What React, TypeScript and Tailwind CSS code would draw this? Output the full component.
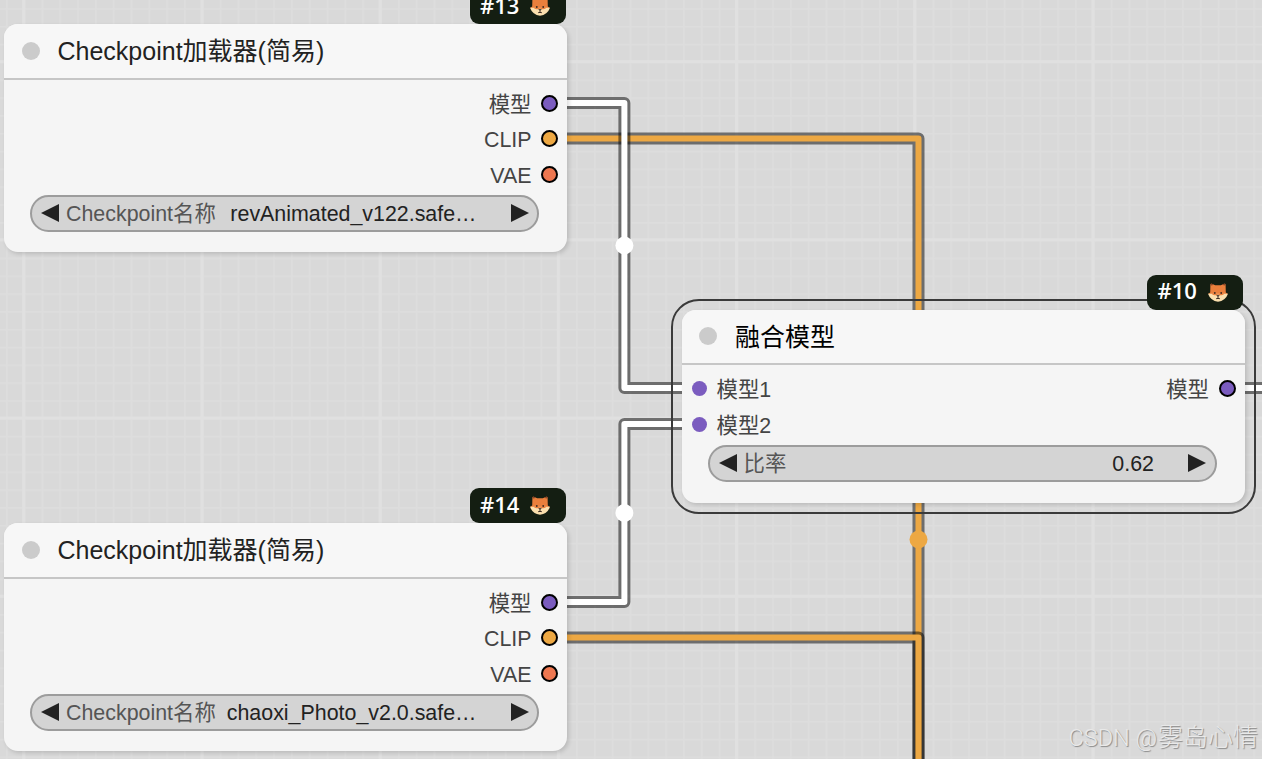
import type { ReactNode } from "react";

const MODEL = "#7b5cbf";
const CLIP = "#eda843";
const VAE = "#ee7750";

type Slot = { label: string; color: string };

function Fox() {
  return (
    <svg width="20" height="19" viewBox="0 0 20 19" className="shrink-0" aria-hidden>
      <path d="M2.4 1.4 Q2.6 .3 3.8 .8 L7.2 2.2 H12.8 L16.2 .8 Q17.4 .3 17.6 1.4 L17.8 9.6 L20 11 H0 L2.2 9.6 Z" fill="#ea7f3c" />
      <path d="M0 10.8 H20 Q17.4 18 10 18.8 Q2.6 18 0 10.8 Z" fill="#fbdfae" />
      <path d="M3.6 10.6 H16.4 Q15.4 12.8 12 12.2 L10 11.4 L8 12.2 Q4.6 12.8 3.6 10.6 Z" fill="#ea7f3c" />
      <path d="M2.4 1.4 Q2.6 .3 3.8 .8 L6.2 1.8 L3.2 2.4 Z M17.6 1.4 Q17.4 .3 16.2 .8 L13.8 1.8 L16.8 2.4 Z" fill="#8a4527" />
      <circle cx="6.8" cy="10" r="0.9" fill="#3b2a22" />
      <circle cx="13.2" cy="10" r="0.9" fill="#3b2a22" />
      <path d="M8.8 12.4 H11.2 L10 13.8 Z M8 16 L10 14.6 L12 16" fill="#3b2a22" stroke="#3b2a22" strokeWidth="0.7" />
    </svg>
  );
}

function Badge({ id }: { id: number }) {
  return (
    <div className="absolute right-[1.5px] bottom-full flex h-[35px] w-[96px] items-center gap-[11px] rounded-[9px] bg-[#141e12] pl-[10.5px] font-['Open_Sans','Noto_Sans',sans-serif] text-[22px] leading-none font-semibold text-white">
      <span className="pb-[4px]">#{id}</span>
      <Fox />
    </div>
  );
}

function Input({ label, color }: Slot) {
  return (
    <div className="flex h-[35.6px] items-center gap-[10px]">
      <span className="size-[15px] rounded-full" style={{ backgroundColor: color }} />
      <span className="pt-[4px]">{label}</span>
    </div>
  );
}

function Output({ label, color }: Slot) {
  return (
    <div className="flex h-[35.6px] items-center justify-end gap-[9.5px]">
      <span className="pt-[4px]">{label}</span>
      <span className="size-[17px] rounded-full border-2 border-black" style={{ backgroundColor: color }} />
    </div>
  );
}

function Arrow({ flip }: { flip?: boolean }) {
  return (
    <svg width="18" height="18" viewBox="0 0 18 18" className={flip ? "shrink-0 rotate-180" : "shrink-0"} aria-hidden>
      <path d="M0 0 L18 9 L0 18 Z" fill="#222" />
    </svg>
  );
}

function Widget({ label, value }: { label: string; value: string }) {
  return (
    <div className="mr-[28px] ml-[26px] flex h-[37px] items-center rounded-full border-2 border-[#9c9c9c] bg-[#d4d4d4] pr-[8.5px] pl-[9px]">
      <Arrow flip />
      <span className="ml-[7px] pt-[3px] text-[#555]">{label}</span>
      <span className="mr-[34px] ml-auto pt-[3px] text-[#222]">{value}</span>
      <Arrow />
    </div>
  );
}

type NodeProps = {
  id: number;
  title: string;
  inputs?: Slot[];
  outputs: Slot[];
  className: string;
  selected?: boolean;
  children: ReactNode;
};

function GraphNode({ id, title, inputs = [], outputs, className, selected, children }: NodeProps) {
  return (
    <section className={`absolute w-[563px] rounded-[14px] bg-[#f5f5f5] shadow-[2px_2px_4px_rgba(0,0,0,0.14)] ${className}`}>
      {selected && <div className="absolute -inset-[11px] rounded-[28px] border-2 border-[#3a3a3a]" />}
      <header className="flex h-[55.5px] items-center gap-[18px] rounded-t-[14px] border-b-2 border-[#c6c6c6] bg-[#f7f7f7] pl-[17.5px]">
        <span className="size-[18px] rounded-full bg-[#cbcbcb]" />
        <h2 className={`pt-[2px] text-[25px] leading-none ${selected ? "text-black" : "text-[#222]"}`}>{title}</h2>
      </header>
      <div className="flex justify-between pt-[6px] pr-[9px] pb-[2.5px] pl-[10px] text-[21.4px] leading-none text-[#444]">
        <div>
          {inputs.map((slot) => (
            <Input key={slot.label} {...slot} />
          ))}
        </div>
        <div>
          {outputs.map((slot) => (
            <Output key={slot.label} {...slot} />
          ))}
        </div>
      </div>
      <div className="text-[21.4px] leading-none">{children}</div>
      <Badge id={id} />
    </section>
  );
}

const loaderOutputs: Slot[] = [
  { label: "模型", color: MODEL },
  { label: "CLIP", color: CLIP },
  { label: "VAE", color: VAE },
];

const links = [
  { d: "M549 138.5 H918.5 V770", color: CLIP },
  { d: "M549 103 H624.4 V388 H699", color: "#fff" },
  { d: "M549 602 H624.4 V424 H699", color: "#fff" },
  { d: "M549 637.5 H918.5 V770", color: CLIP },
  { d: "M1227 388 H1280", color: "#fff" },
];

function Links() {
  return (
    <svg width="1262" height="759" className="absolute inset-0" fill="none" aria-hidden>
      <defs>
        <pattern id="minor" x="23.7" y="61.6" width="17.82" height="17.82" patternUnits="userSpaceOnUse">
          <path d="M0 0 H17.82 M0 0 V17.82" stroke="#dddddd" strokeWidth="3.6" />
        </pattern>
        <pattern id="major" x="22.2" y="60.1" width="178.2" height="178.2" patternUnits="userSpaceOnUse">
          <path d="M0 1.5 H178.2 M1.5 0 V178.2" stroke="#e0e0e0" strokeWidth="3" />
        </pattern>
      </defs>
      <rect width="1262" height="759" fill="url(#minor)" />
      <rect width="1262" height="759" fill="url(#major)" />
      {links.map(({ d, color }) => (
        <g key={d} strokeLinejoin="round">
          <path d={d} stroke="#000" strokeOpacity="0.5" strokeWidth="12" />
          <path d={d} stroke={color} strokeWidth="6" />
        </g>
      ))}
      <circle cx="624.4" cy="245.5" r="9" fill="#fff" />
      <circle cx="624.4" cy="513" r="9" fill="#fff" />
      <circle cx="918.5" cy="539.5" r="9" fill={CLIP} />
    </svg>
  );
}

export default function App() {
  return (
    <main className="relative h-[759px] w-[1262px] overflow-hidden bg-[#d9d9d9] font-['Liberation_Sans','Noto_Sans_CJK_SC',sans-serif] whitespace-nowrap">
      <Links />
      <GraphNode id={13} title="Checkpoint加载器(简易)" outputs={loaderOutputs} className="top-[24px] left-[4px] h-[228px]">
        <Widget label="Checkpoint名称" value="revAnimated_v122.safe…" />
      </GraphNode>
      <GraphNode id={14} title="Checkpoint加载器(简易)" outputs={loaderOutputs} className="top-[523px] left-[4px] h-[228px]">
        <Widget label="Checkpoint名称" value="chaoxi_Photo_v2.0.safe…" />
      </GraphNode>
      <GraphNode
        id={10}
        title="融合模型"
        inputs={[
          { label: "模型1", color: MODEL },
          { label: "模型2", color: MODEL },
        ]}
        outputs={[{ label: "模型", color: MODEL }]}
        className="top-[309.5px] left-[681.5px] h-[193px]"
        selected
      >
        <Widget label="比率" value="0.62" />
      </GraphNode>
      <footer className="absolute right-[4px] bottom-[9px] flex items-baseline text-[25px] leading-none font-light text-[#e9e9e9] [text-shadow:1px_1px_1px_#888]">
        <span className="mr-px font-[Roboto] text-[23.5px] whitespace-pre">CSDN @</span>
        雾岛心情
      </footer>
    </main>
  );
}
